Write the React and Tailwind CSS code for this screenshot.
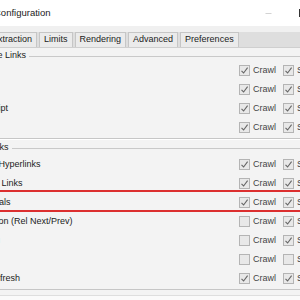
import { Minus } from 'lucide-react';

const font = { fontFamily: '"Liberation Sans", Arial, sans-serif' };

const Box = ({ checked }) => (
  <span className="w-[11px] h-[11px] border border-[#b4b4b4] bg-[#e8e8e8] flex items-center justify-center shrink-0">
    {checked && (
      <svg width="9" height="9" viewBox="0 0 9 9">
        <path d="M1.5 4.8 L3.6 7 L7.6 1.6" fill="none" stroke="#666" strokeWidth="1.1" />
      </svg>
    )}
  </span>
);

const Row = ({ label, crawl, store, highlight }) => (
  <div className="relative flex items-center h-[19px]">
    <span className="w-[279px] pl-[6px] text-[9px] text-[#1b1b1b] whitespace-nowrap">{label}</span>
    <div className="flex items-center w-[44px]">
      <Box checked={crawl} />
      <span className="ml-[3px] text-[9px] text-[#454545]">Crawl</span>
    </div>
    <div className="flex items-center">
      <Box checked={store} />
      <span className="ml-[3px] text-[9px] text-[#454545]">Store</span>
    </div>
    {highlight && (
      <div className="absolute left-0 right-0 top-[-3px] bottom-0 border-y-2 border-[#dc2f2f] pointer-events-none"></div>
    )}
  </div>
);

const GroupLabel = ({ text }) => (
  <div className="flex items-center h-[10px] pl-[4px]">
    <span className="text-[9px] text-[#1b1b1b] whitespace-nowrap">{text}</span>
    <div className="flex-1 ml-[3px] h-[1px] bg-[#c9c9c9]"></div>
  </div>
);

const resourceLinks = [
  { label: 'Images', crawl: true, store: true },
  { label: 'CSS', crawl: true, store: true },
  { label: 'JavaScript', crawl: true, store: true },
  { label: 'SWF', crawl: true, store: true },
];

const pageLinks = [
  { label: 'Internal Hyperlinks', crawl: true, store: true },
  { label: 'External Links', crawl: true, store: true },
  { label: 'Canonicals', crawl: true, store: true, highlight: true },
  { label: 'Pagination (Rel Next/Prev)', crawl: false, store: true },
  { label: 'Hreflang', crawl: false, store: true },
  { label: 'AMP', crawl: false, store: false },
  { label: 'Meta Refresh', crawl: true, store: true },
];

const tabs = ['Extraction', 'Limits', 'Rendering', 'Advanced', 'Preferences'];

export default function App() {
  return (
    <div className="w-[300px] h-[300px] overflow-hidden bg-[#f3f3f3] select-none" style={font}>
      {/* title bar */}
      <div className="h-[26px] bg-white flex items-center">
        <span className="ml-[-6px] text-[9.5px] text-[#1b1b1b] whitespace-nowrap">Configuration</span>
        <div className="flex-1"></div>
        <Minus size={9} strokeWidth={1} className="text-[#8a8a8a] mr-[26px] shrink-0" />
        <span className="w-[8px] h-[8px] border border-[#333] mr-[-7px] shrink-0"></span>
      </div>
      <div className="h-[6px] bg-[#f0f0f0]"></div>

      {/* tabs */}
      <div className="h-[16px] bg-[#dedede] border-b border-[#cfcfcf] flex items-end overflow-hidden">
        <div className="flex gap-[2px] ml-[-13px] h-[15px] shrink-0">
          {tabs.map(t => (
            <div key={t} className="h-full px-[4px] bg-[#ebebeb] border border-b-0 border-[#c6c6c6] flex items-center text-[9px] text-[#1b1b1b] whitespace-nowrap">
              {t}
            </div>
          ))}
        </div>
      </div>

      {/* content */}
      <div className="ml-[-40px] w-[400px]">
        <div className="pt-[3px] pb-[1px] border-b border-[#c6c6c6]">
          <GroupLabel text="Resource Links" />
          {resourceLinks.map(r => <Row key={r.label} {...r} />)}
        </div>
        <div className="border-t border-white pt-[1px] pb-[1px] border-b border-b-[#c6c6c6]">
          <div className="h-[14px] flex flex-col justify-center">
            <GroupLabel text="Page Links" />
          </div>
          {pageLinks.map(r => <Row key={r.label} {...r} />)}
        </div>
        <div className="h-[5px]"></div>
        <div className="border-t border-[#dedede] h-[10px] bg-[#fafafa]"></div>
      </div>
    </div>
  );
}
